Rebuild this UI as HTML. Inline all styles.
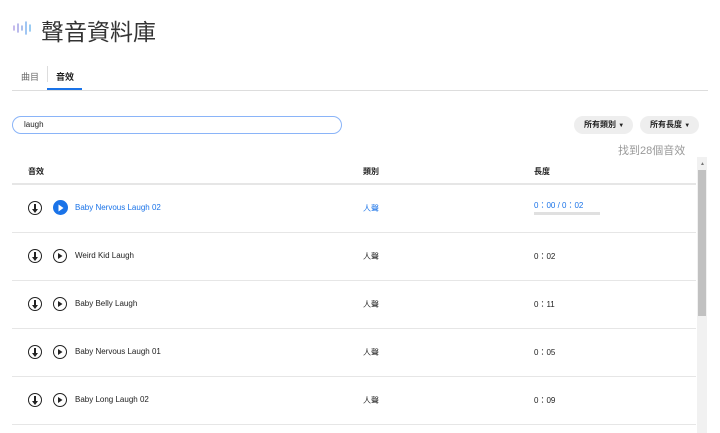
<!DOCTYPE html><html><head><meta charset="utf-8"><style>
body{margin:0;width:720px;height:433px;overflow:hidden;background:#fff;font-family:"Liberation Sans","Noto Sans CJK TC",sans-serif;color:#222;position:relative}
.a{position:absolute}
.t{font-size:8px;white-space:nowrap}
.ic{position:absolute;width:14px;height:14px;border:1.3px solid #222;border-radius:50%;box-sizing:border-box}
.sep{position:absolute;left:12px;width:684px;height:1px;background:#e6e6e6}
.pill{position:absolute;top:116px;height:18px;border-radius:9px;background:#eeeeee;font-size:8px;font-weight:bold;line-height:18px;box-sizing:border-box;padding-left:10px}
</style></head><body>
<svg class="a" style="left:12px;top:20px" width="22" height="16" viewBox="0 0 22 16"><g stroke-width="1.6" stroke-linecap="round"><line x1="2" y1="6" x2="2" y2="10" stroke="#b8a8e8"/><line x1="6" y1="4" x2="6" y2="12" stroke="#a8a8e8"/><line x1="10" y1="6" x2="10" y2="10" stroke="#98b0e8"/><line x1="14" y1="2" x2="14" y2="14" stroke="#88b8f0"/><line x1="18" y1="5" x2="18" y2="11" stroke="#80c0f0"/></g></svg>
<div class="a" style="left:41px;top:13px;font-size:23px;color:#333">聲音資料庫</div>
<div class="a t" style="left:21px;top:70px;font-size:9px;color:#666">曲目</div>
<div class="a" style="left:47px;top:66px;width:1px;height:16px;background:#ddd"></div>
<div class="a t" style="left:56px;top:70px;font-size:9px;font-weight:bold">音效</div>
<div class="a" style="left:47px;top:88px;width:35px;height:2px;background:#1a73e8"></div>
<div class="a" style="left:12px;top:90px;width:696px;height:1px;background:#ddd"></div>
<div class="a" style="left:12px;top:116px;width:330px;height:18px;border:1px solid #8ab4f8;border-radius:9px;box-sizing:border-box"></div>
<div class="a t" style="left:24px;top:120px">laugh</div>
<div class="pill" style="left:574px;width:59px">所有類別 <span style="font-size:6px">▼</span></div>
<div class="pill" style="left:640px;width:59px">所有長度 <span style="font-size:6px">▼</span></div>
<div class="a" style="left:618px;top:142px;font-size:11px;color:#999">找到28個音效</div>
<div class="a t" style="left:28px;top:166px;font-weight:bold">音效</div>
<div class="a t" style="left:363px;top:166px;font-weight:bold">類別</div>
<div class="a t" style="left:534px;top:166px;font-weight:bold">長度</div>
<div class="a" style="left:12px;top:183px;width:684px;height:2px;background:#e6e6e6"></div>
<div class="a" style="left:697px;top:157px;width:10px;height:276px;background:#f1f1f1"></div>
<div class="a" style="left:698px;top:170px;width:8px;height:146px;background:#c1c1c1"></div>
<div class="a" style="left:700px;top:161px;font-size:5px;color:#777">▲</div>

<div class="ic" style="left:28px;top:201px"></div><div class="a" style="left:53px;top:200px;width:15px;height:15px;border-radius:50%;background:#1a73e8"></div>
<div class="a t" style="left:75px;top:203px;color:#1a73e8">Baby Nervous Laugh 02</div>
<div class="a t" style="left:363px;top:203px;color:#1a73e8">人聲</div>
<div class="a t" style="left:534px;top:200px;color:#1a73e8">0：00 / 0：02</div>
<div class="a" style="left:534px;top:212px;width:66px;height:3px;background:#e0e0e0"></div>
<div class="sep" style="top:232px"></div>

<div class="ic" style="left:28px;top:249px"></div><div class="ic" style="left:53px;top:249px"></div>
<div class="a t" style="left:75px;top:251px">Weird Kid Laugh</div><div class="a t" style="left:363px;top:251px">人聲</div><div class="a t" style="left:534px;top:251px">0：02</div>
<div class="sep" style="top:280px"></div>

<div class="ic" style="left:28px;top:297px"></div><div class="ic" style="left:53px;top:297px"></div>
<div class="a t" style="left:75px;top:299px">Baby Belly Laugh</div><div class="a t" style="left:363px;top:299px">人聲</div><div class="a t" style="left:534px;top:299px">0：11</div>
<div class="sep" style="top:328px"></div>

<div class="ic" style="left:28px;top:345px"></div><div class="ic" style="left:53px;top:345px"></div>
<div class="a t" style="left:75px;top:347px">Baby Nervous Laugh 01</div><div class="a t" style="left:363px;top:347px">人聲</div><div class="a t" style="left:534px;top:347px">0：05</div>
<div class="sep" style="top:376px"></div>

<div class="ic" style="left:28px;top:393px"></div><div class="ic" style="left:53px;top:393px"></div>
<div class="a t" style="left:75px;top:395px">Baby Long Laugh 02</div><div class="a t" style="left:363px;top:395px">人聲</div><div class="a t" style="left:534px;top:395px">0：09</div>
<div class="sep" style="top:424px"></div>

<svg class="a" style="left:0;top:0" width="80" height="433">
<g fill="#222">
<path d="M34 204v5h-2l3 4 3-4h-2v-5z" transform="translate(0,0)"/>
<path d="M34 252v5h-2l3 4 3-4h-2v-5z"/>
<path d="M34 300v5h-2l3 4 3-4h-2v-5z"/>
<path d="M34 348v5h-2l3 4 3-4h-2v-5z"/>
<path d="M34 396v5h-2l3 4 3-4h-2v-5z"/>
<path d="M58 253v6l4.5-3z"/><path d="M58 301v6l4.5-3z"/><path d="M58 349v6l4.5-3z"/><path d="M58 397v6l4.5-3z"/>
</g>
<path d="M58.5 204.5v7l5-3.5z" fill="#fff"/>
</svg>
</body></html>
